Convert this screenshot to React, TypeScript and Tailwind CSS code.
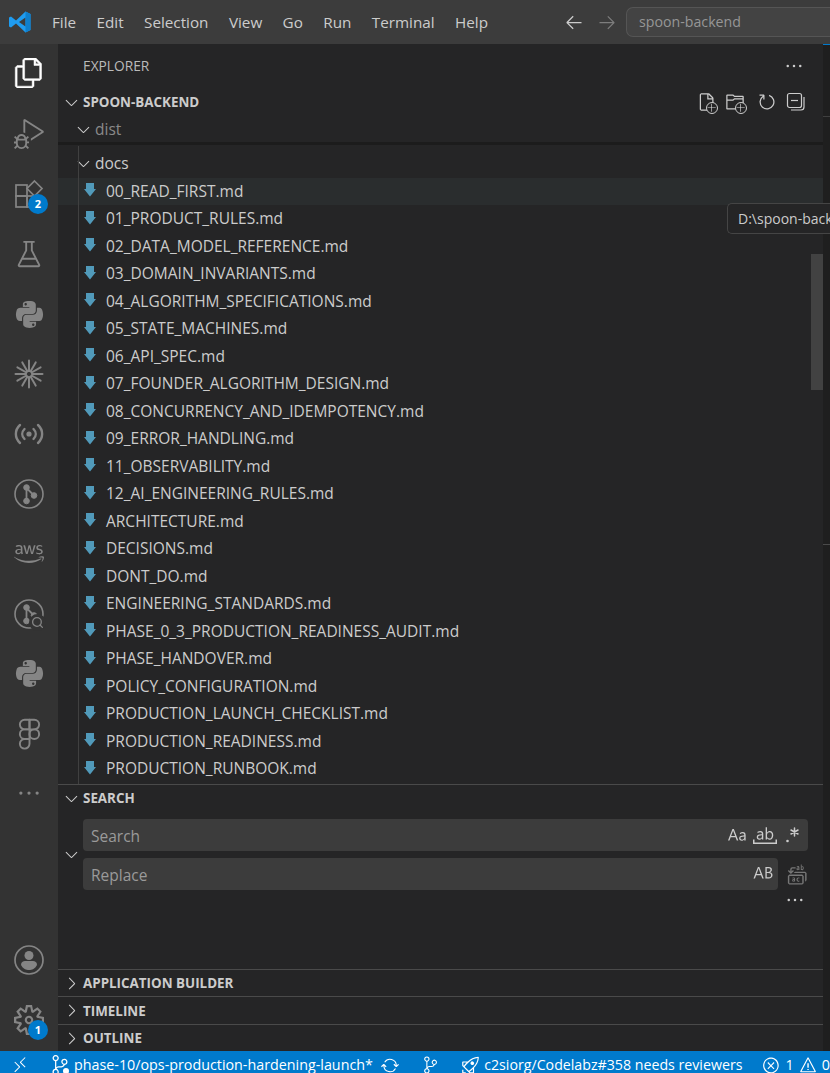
import {
  VscFiles, VscDebugAlt, VscBeaker, VscSettingsGear, VscFile, VscFolder, VscAdd,
  VscRefresh, VscChevronDown, VscChevronRight,
  VscCaseSensitive, VscWholeWord, VscPreserveCase, VscReplaceAll, VscEllipsis,
  VscArrowLeft, VscArrowRight, VscRemote, VscSync, VscRocket, VscSourceControl, VscError, VscWarning,
} from "react-icons/vsc";
import { FaPython, FaAws } from "react-icons/fa";
import { Figma, Search as SearchIcon } from "lucide-react";

const files = [
  "00_READ_FIRST.md",
  "01_PRODUCT_RULES.md",
  "02_DATA_MODEL_REFERENCE.md",
  "03_DOMAIN_INVARIANTS.md",
  "04_ALGORITHM_SPECIFICATIONS.md",
  "05_STATE_MACHINES.md",
  "06_API_SPEC.md",
  "07_FOUNDER_ALGORITHM_DESIGN.md",
  "08_CONCURRENCY_AND_IDEMPOTENCY.md",
  "09_ERROR_HANDLING.md",
  "11_OBSERVABILITY.md",
  "12_AI_ENGINEERING_RULES.md",
  "ARCHITECTURE.md",
  "DECISIONS.md",
  "DONT_DO.md",
  "ENGINEERING_STANDARDS.md",
  "PHASE_0_3_PRODUCTION_READINESS_AUDIT.md",
  "PHASE_HANDOVER.md",
  "POLICY_CONFIGURATION.md",
  "PRODUCTION_LAUNCH_CHECKLIST.md",
  "PRODUCTION_READINESS.md",
  "PRODUCTION_RUNBOOK.md",
];

const menus = ["File", "Edit", "Selection", "View", "Go", "Run", "Terminal", "Help"];

const VsLogo = () => (
  <svg width="24" height="24" viewBox="0 0 24 24">
    <path d="M17.5 1.5 L22.5 4 V20 L17.5 22.5 L8 13.5 L3 17.5 L1 16.5 V7.5 L3 6.5 L8 10.5 Z M17.5 7.5 L11 12 L17.5 16.5 Z" fill="#1f9cf0" fillRule="evenodd" />
    <path d="M17.5 1.5 L22.5 4 V20 L17.5 22.5 Z" fill="#0f7fcc" />
  </svg>
);

const MdIcon = () => (
  <svg width="14" height="16" viewBox="0 0 14 16" className="shrink-0 -mt-[2px]">
    <path d="M3 1 H11 V7 H13 L7 14.5 L1 7 H3 Z" fill="#519aba" />
  </svg>
);

const ExtensionsIcon = () => (
  <svg width="30" height="30" viewBox="0 0 30 30" fill="none" stroke="#858585" strokeWidth="1.7">
    <rect x="2" y="6" width="11" height="11" />
    <rect x="2" y="17" width="11" height="11" />
    <rect x="13" y="17" width="11" height="11" />
    <path d="M20.5 2 L28 9.5 L20.5 17 L13 9.5 Z" />
  </svg>
);

const ClaudeStar = () => (
  <svg width="30" height="30" viewBox="0 0 30 30" stroke="#858585" strokeWidth="2" strokeLinecap="round">
    <path d="M15 1.5 V12 M15 18 V28.5 M1.5 15 H12 M18 15 H28.5 M21.7 3.4 L16.5 12.4 M13.5 17.6 L8.3 26.6 M26.6 8.3 L17.6 13.5 M12.4 16.5 L3.4 21.7 M26.6 21.7 L17.6 16.5 M12.4 13.5 L3.4 8.3 M21.7 26.6 L16.5 17.6 M13.5 12.4 L8.3 3.4" />
  </svg>
);

const BroadcastIcon = () => (
  <svg width="30" height="22" viewBox="0 0 30 22" fill="none" stroke="#858585" strokeWidth="2.4" strokeLinecap="round">
    <path d="M6 2 C0.5 7 0.5 15 6 20 M24 2 C29.5 7 29.5 15 24 20" />
    <path d="M10.5 6 C7.5 9 7.5 13 10.5 16 M19.5 6 C22.5 9 22.5 13 19.5 16" />
    <circle cx="15" cy="11" r="2.6" fill="#858585" stroke="none" />
  </svg>
);

const GitCircle = () => (
  <svg width="30" height="30" viewBox="0 0 30 30" fill="none" stroke="#858585">
    <circle cx="15" cy="15" r="14" strokeWidth="1.6" />
    <path d="M12.5 8 V22 M12.5 9 L20 16.5" strokeWidth="1.8" />
    <circle cx="12.5" cy="8.5" r="2.8" fill="#858585" />
    <circle cx="12.5" cy="22" r="2.8" fill="#858585" />
    <circle cx="20" cy="16.5" r="2.8" fill="#858585" />
  </svg>
);

const GitInspect = () => (
  <div className="relative w-[30px] h-[30px]">
    <GitCircle />
    <div className="absolute right-[-2px] bottom-[-2px] w-[17px] h-[17px] rounded-full bg-[#333333] flex items-center justify-center">
      <SearchIcon size={13} strokeWidth={2.4} className="text-[#858585]" />
    </div>
  </div>
);

const AccountIcon = () => (
  <svg width="30" height="30" viewBox="0 0 30 30" fill="none" stroke="#858585">
    <circle cx="15" cy="15" r="14" strokeWidth="1.7" />
    <circle cx="15" cy="10.5" r="4.5" fill="#858585" stroke="none" />
    <path d="M7 20 C7 17 9 16 11 16 H19 C21 16 23 17 23 20 C21 24 18 25 15 25 C12 25 9 24 7 20 Z" fill="#858585" stroke="none" />
  </svg>
);

const CollapseIcon = () => (
  <svg width="20" height="20" viewBox="0 0 20 20" fill="none" stroke="#cccccc" strokeWidth="1.2">
    <rect x="1.5" y="1.5" width="14" height="14" rx="2" />
    <path d="M5 8.5 H12" />
    <path d="M18 5 V15 C18 16.8 16.8 18 15 18 H5" />
  </svg>
);

const RegexIcon = () => (
  <svg width="24" height="24" viewBox="0 0 24 24" stroke="#cccccc" strokeWidth="1.5" strokeLinecap="round">
    <circle cx="6.5" cy="18" r="1.3" fill="#cccccc" stroke="none" />
    <path d="M13.5 5 V13 M10 7 L17 11 M17 7 L10 11" />
  </svg>
);

const PlusBadge = () => (
  <span className="absolute right-[-2px] bottom-[-2px] w-[12px] h-[12px] rounded-full bg-[#252526] border border-[#cccccc] flex items-center justify-center">
    <VscAdd size={10} className="text-[#e0e0e0]" />
  </span>
);

const Badge = ({ n }: { n: number }) => (
  <span className="absolute right-[10px] bottom-[10px] w-5 h-5 rounded-full bg-[#007acc] text-white text-[11px] font-bold flex items-center justify-center">
    {n}
  </span>
);

const ActivityItem = ({ children, badge }: { children: React.ReactNode; badge?: number }) => (
  <div className="relative h-[59.9px] w-full shrink-0 flex items-center justify-center text-[#858585]">
    {children}
    {badge ? <Badge n={badge} /> : null}
  </div>
);

const SectionHeader = ({ title, open }: { title: string; open?: boolean }) => (
  <div className="h-[27.5px] shrink-0 flex items-center border-t border-[#4a4a4a] pl-[4px] pt-[1px] text-[#cccccc]">
    {open ? <VscChevronDown size={19} /> : <VscChevronRight size={19} />}
    <span className="ml-[2px] text-[13.4px] font-bold">{title}</span>
  </div>
);

export default function App() {
  return (
    <div className="w-[830px] h-[1073px] flex flex-col overflow-hidden bg-[#252526] font-['Open_Sans','Noto_Sans',sans-serif]">
      {/* Title bar */}
      <header className="h-[44px] shrink-0 bg-[#3c3c3c] flex items-center text-[#cccccc] text-[15.25px]">
        <div className="w-[40px] pl-[8px]"><VsLogo /></div>
        <nav className="flex items-center gap-[20.4px] ml-[12px]">
          {menus.map((m) => (
            <span key={m}>{m}</span>
          ))}
        </nav>
        <div className="flex items-center gap-[13px] ml-[76px]">
          <VscArrowLeft size={20} className="text-[#cccccc]" />
          <VscArrowRight size={20} className="text-[#7d7d7d]" />
        </div>
        <div className="ml-[9px] flex-1 h-[30px] rounded-l-[7px] border border-r-0 border-[#555555] bg-[#434343] flex items-center pl-[12px] text-[#969696] text-[14.2px]">
          spoon-backend
        </div>
      </header>

      <div className="flex-1 flex min-h-0">
        {/* Activity bar */}
        <aside className="w-[58px] shrink-0 bg-[#333333] flex flex-col items-center">
          <div className="h-[60.5px] pb-[2px] w-full shrink-0 flex items-center justify-center text-white">
            <VscFiles size={30} stroke="currentColor" strokeWidth={0.4} />
          </div>
          <ActivityItem><VscDebugAlt size={30} /></ActivityItem>
          <ActivityItem badge={2}><ExtensionsIcon /></ActivityItem>
          <ActivityItem><VscBeaker size={30} /></ActivityItem>
          <ActivityItem><FaPython size={31} /></ActivityItem>
          <ActivityItem><ClaudeStar /></ActivityItem>
          <ActivityItem><BroadcastIcon /></ActivityItem>
          <ActivityItem><GitCircle /></ActivityItem>
          <ActivityItem><FaAws size={30} /></ActivityItem>
          <ActivityItem><GitInspect /></ActivityItem>
          <ActivityItem><FaPython size={31} /></ActivityItem>
          <ActivityItem><Figma size={33} strokeWidth={1.4} /></ActivityItem>
          <ActivityItem><VscEllipsis size={26} /></ActivityItem>
          <div className="flex-1" />
          <ActivityItem><AccountIcon /></ActivityItem>
          <div className="w-full mb-[1px]">
            <ActivityItem badge={1}><VscSettingsGear size={30} /></ActivityItem>
          </div>
        </aside>

        {/* Side bar */}
        <main className="flex-1 min-w-0 flex">
          <div className="relative flex-1 min-w-0 flex flex-col bg-[#252526]">
            <div className="h-[44px] shrink-0 flex items-center justify-between pl-[25px] pr-[19px] text-[#bbbbbb] text-[13.75px]">
              <span>EXPLORER</span>
              <VscEllipsis size={20} className="text-[#cccccc]" />
            </div>

            <div className="h-[27.5px] shrink-0 flex items-center pl-[4px] pr-[17px] pt-[1px] text-[#cccccc]">
              <VscChevronDown size={19} />
              <span className="ml-[2px] text-[13.4px] font-bold">SPOON-BACKEND</span>
              <div className="ml-auto flex items-center gap-[9.5px]">
                <span className="relative"><VscFile size={20} /><PlusBadge /></span>
                <span className="relative mr-[2px]"><VscFolder size={20} /><PlusBadge /></span>
                <VscRefresh size={20} />
                <CollapseIcon />
              </div>
            </div>

            <div className="h-[29px] shrink-0 flex items-center pl-[16px] pt-[2px] text-[#8a8a8a] text-[15.5px] border-b-[3px] border-[#1c1c1c]">
              <VscChevronDown size={19} className="text-[#cccccc]" />
              <span className="ml-[2px]">dist</span>
            </div>

            <div className="h-[33px] shrink-0 flex items-center pl-[16px] text-[#cccccc] text-[15.5px] pt-[5px]">
              <VscChevronDown size={19} />
              <span className="ml-[2px]">docs</span>
            </div>

            <ul className="flex-1 min-h-0 text-[#cccccc] text-[15.5px]">
              {files.map((f, i) => (
                <li
                  key={f}
                  className={`h-[27.5px] flex items-center pl-[25px] ${i === 0 ? "bg-[#2a2d2e]" : ""}`}
                >
                  <MdIcon />
                  <span className="ml-[9px] whitespace-nowrap">{f}</span>
                </li>
              ))}
            </ul>

            {/* Search */}
            <div className="shrink-0 h-[185px] flex flex-col">
              <SectionHeader title="SEARCH" open />
              <div className="flex mt-[8px] pl-[4px]">
                <div className="flex items-center text-[#cccccc]"><VscChevronDown size={19} /></div>
                <div className="flex-1 ml-[2px] pr-[15px] flex flex-col gap-[7px]">
                  <div className="h-[32px] rounded-[4px] bg-[#3c3c3c] flex items-center pl-[8px] pr-[3px] text-[#9a9a9a] text-[15.5px]">
                    <span className="pt-[3px]">Search</span>
                    <div className="ml-auto flex items-center gap-[4px] text-[#cccccc]">
                      <VscCaseSensitive size={24} />
                      <VscWholeWord size={24} />
                      <RegexIcon />
                    </div>
                  </div>
                  <div className="flex items-center gap-[7px]">
                    <div className="flex-1 h-[32px] rounded-[4px] bg-[#3c3c3c] flex items-center pl-[8px] pr-[3px] text-[#9a9a9a] text-[15.5px]">
                      <span className="pt-[3px]">Replace</span>
                      <VscPreserveCase size={24} className="ml-auto text-[#cccccc]" />
                    </div>
                    <VscReplaceAll size={23} className="text-[#777777]" />
                  </div>
                </div>
              </div>
              <div className="flex justify-end pr-[18px] text-[#cccccc]"><VscEllipsis size={20} /></div>
            </div>

            <SectionHeader title="APPLICATION BUILDER" />
            <SectionHeader title="TIMELINE" />
            <SectionHeader title="OUTLINE" />

            {/* indent guide */}
            <div className="absolute left-[20px] top-[102px] bottom-[267px] w-px bg-[#404040]" />

            {/* scrollbar thumb */}
            <div className="absolute right-0 top-[210px] w-[12px] h-[136px] bg-[#424242]" />

            {/* Tooltip */}
            <div className="absolute z-10 left-[669px] top-[159px] h-[31px] w-[103px] rounded-l-[5px] border border-r-0 border-[#454545] bg-[#252526] flex items-center pl-[10px] text-[#cccccc] text-[14px] whitespace-nowrap overflow-hidden">
              D:\spoon-back
            </div>
          </div>
          {/* editor sliver */}
          <div className="relative w-[7px] shrink-0 bg-[#1f1f1f] border-t border-[#007acc]">
            <div className="absolute left-0 right-0 top-[71px] h-px bg-[#3f3f3f]" />
            <div className="absolute left-0 right-0 top-[499px] h-px bg-[#4a4a4a]" />
          </div>
        </main>
      </div>

      {/* Status bar */}
      <footer className="h-[22px] shrink-0 bg-[#007acc] flex items-center pt-[6px] text-white text-[14.3px] whitespace-nowrap overflow-hidden">
        <div className="w-[42px] flex justify-center"><VscRemote size={18} /></div>
        <span className="relative ml-[10px]">
          <VscSourceControl size={20} />
          <span className="absolute right-[-1px] bottom-[-1px] w-[10px] h-[10px] rounded-full bg-white border-2 border-[#007acc]" />
        </span>
        <span className="ml-[4px]">phase-10/ops-production-hardening-launch*</span>
        <VscSync size={19} className="ml-[8px]" />
        <VscSourceControl size={18} className="ml-[23px]" />
        <VscRocket size={20} className="ml-[22px]" />
        <span className="ml-[4px] text-[14.2px]">c2siorg/Codelabz#358 needs reviewers</span>
        <VscError size={19} className="ml-[20px]" />
        <span className="ml-[5px]">1</span>
        <VscWarning size={19} className="ml-[5px]" />
        <span className="ml-[5px]">0</span>
      </footer>
    </div>
  );
}
